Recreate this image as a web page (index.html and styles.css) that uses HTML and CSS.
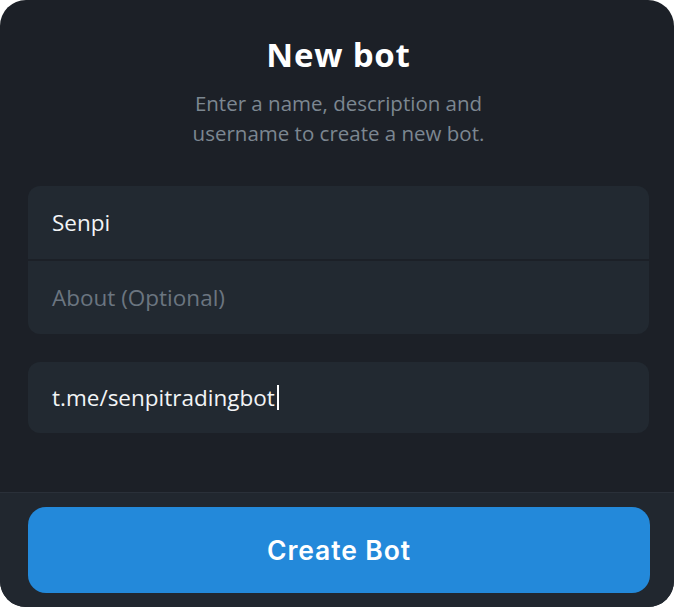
FILE: index.html
```html
<!DOCTYPE html>
<html>
<head>
<meta charset="utf-8">
<link rel="stylesheet" href="styles.css">
</head>
<body>
<div class="card">
  <div class="content">
    <h1 class="title">New bot</h1>
    <p class="subtitle">Enter a name, description and<br>username to create a new bot.</p>
    <div class="group">
      <div class="field">Senpi</div>
      <div class="divider"></div>
      <div class="field placeholder">About (Optional)</div>
    </div>
    <div class="group single">
      <div class="field">t.me/senpitradingbot<span class="caret"></span></div>
    </div>
  </div>
  <div class="footer">
    <button class="btn">Create Bot</button>
  </div>
</div>
</body>
</html>
```
FILE: styles.css
```css
html, body {
  margin: 0;
  padding: 0;
  background: #ffffff;
}
body {
  width: 675px;
  height: 609px;
  font-family: "Open Sans", "Noto Sans", sans-serif;
}
.card {
  width: 674px;
  height: 607px;
  background: #1c2027;
  border-radius: 26px;
  overflow: hidden;
  display: flex;
  flex-direction: column;
}
.content {
  flex: 1;
  padding: 0 25px 0 28px;
  display: flex;
  flex-direction: column;
}
.title {
  margin: 33px 0 0;
  text-align: center;
  color: #ffffff;
  font-size: 33px;
  font-weight: 700;
  letter-spacing: 0.8px;
  line-height: 44px;
}
.subtitle {
  margin: 11px 0 0;
  text-align: center;
  color: #7c8791;
  font-size: 20.5px;
  line-height: 30px;
}
.group {
  margin-top: 38px;
  background: #222931;
  border-radius: 12px;
  display: flex;
  flex-direction: column;
}
.group.single {
  margin-top: 28px;
}
.field {
  height: 73px;
  padding: 0 24px;
  display: flex;
  align-items: center;
  color: #f2f4f6;
  font-size: 22.5px;
}
.field.placeholder {
  color: #6b7580;
}
.divider {
  height: 2px;
  background: #1c2027;
}
.single .field {
  height: 71px;
}
.caret {
  display: inline-block;
  width: 2px;
  height: 25px;
  background: #ffffff;
  margin-left: 2px;
}
.footer {
  height: 115px;
  background: #21272f;
  border-top: 1px solid #2a3039;
  padding: 14px 24px 0 28px;
  box-sizing: border-box;
}
.btn {
  width: 622px;
  height: 86px;
  border: none;
  border-radius: 18px;
  background: #2389da;
  color: #ffffff;
  font-family: "Inter", "Roboto", sans-serif;
  font-size: 26.5px;
  font-weight: 600;
  letter-spacing: 0.9px;
  padding: 0;
}
```
